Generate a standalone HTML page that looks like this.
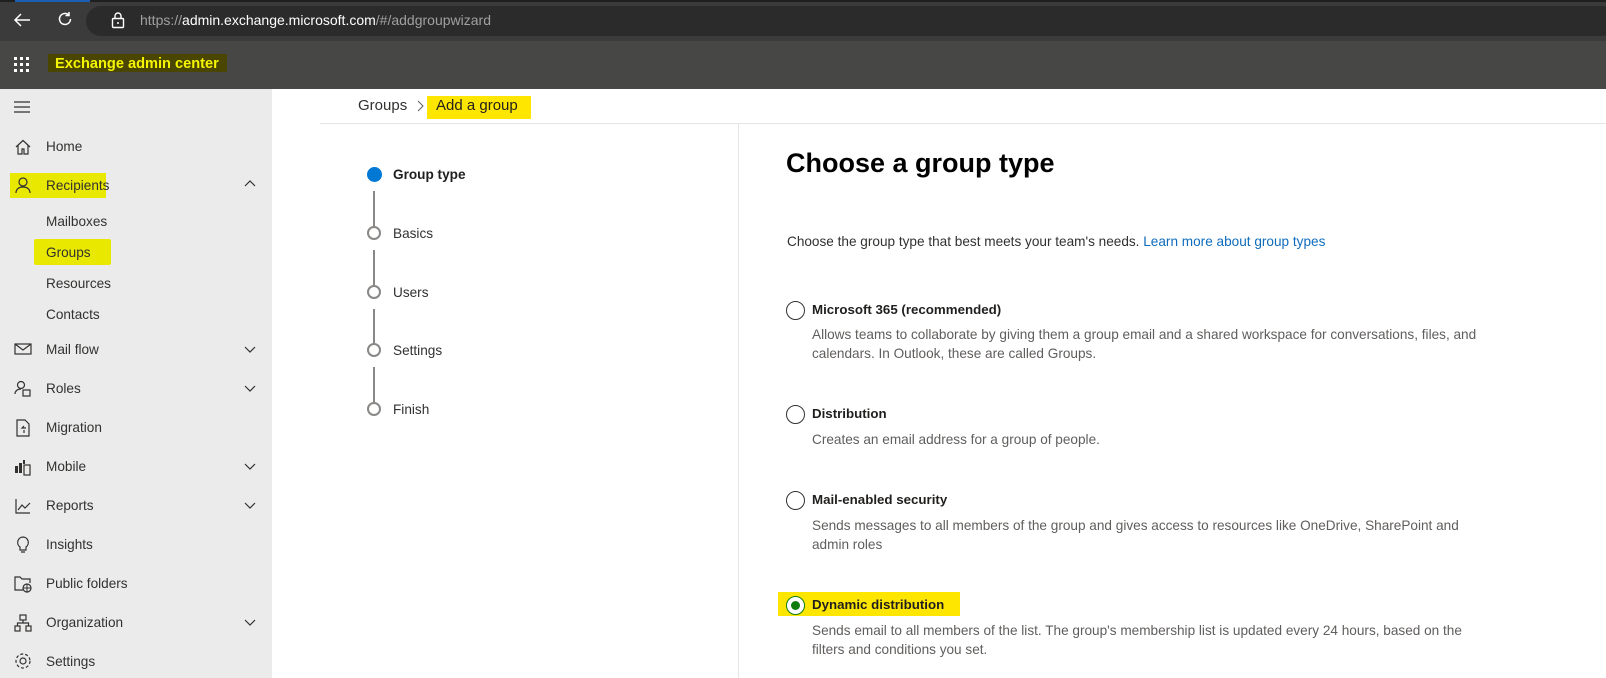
<!DOCTYPE html>
<html><head><meta charset="utf-8"><style>
*{margin:0;padding:0;box-sizing:border-box}
body{width:1606px;height:678px;overflow:hidden;position:relative;background:#fff;font-family:"Liberation Sans",sans-serif;color:#323130}
.a{position:absolute;white-space:nowrap}
.si{position:absolute;left:46px;font-size:13.6px;color:#323130;line-height:18px}
.ic{position:absolute;left:14px}
.ch{position:absolute;left:243px}
.st{position:absolute;left:367px;width:14px;height:14px;border:2px solid #8a8886;border-radius:50%;background:#fff}
.sl{position:absolute;left:393px;font-size:13.6px;line-height:16px;color:#323130}
.rd{position:absolute;left:786px;width:19px;height:19px;border:1.5px solid #323130;border-radius:50%;background:#fff}
.ot{position:absolute;left:812px;font-size:13.3px;font-weight:bold;line-height:16px;color:#201f1e}
.od{position:absolute;left:812px;font-size:13.6px;line-height:19px;color:#605e5c}
</style></head><body>
<div class="a" style="left:0;top:0;width:1606px;height:41px;background:#3b3b3b"></div>
<div class="a" style="left:0;top:0;width:1606px;height:2px;background:#1f1f1f"></div>
<div class="a" style="left:15px;top:0;width:75px;height:2px;background:#1a5fb4"></div>
<div class="a" style="left:86px;top:6px;width:1530px;height:30px;background:#2b2b2b;border-radius:15px"></div>
<svg class="a" style="left:12px;top:11px" width="20" height="18" viewBox="0 0 20 18"><path d="M18 9H3M9 3L3 9l6 6" stroke="#fff" stroke-width="1.5" fill="none"/></svg>
<svg class="a" style="left:56px;top:10px" width="18" height="18" viewBox="0 0 18 18"><path d="M14.5 9a5.5 5.5 0 1 1-2-4.3M13 2v3.5H9.5" stroke="#fff" stroke-width="1.5" fill="none"/></svg>
<svg class="a" style="left:111px;top:12px" width="14" height="17" viewBox="0 0 14 17"><rect x="1.5" y="6.5" width="11" height="9" rx="1" stroke="#fff" fill="none" stroke-width="1.4"/><path d="M4 6.5V4a3 3 0 0 1 6 0v2.5" stroke="#fff" fill="none" stroke-width="1.4"/><circle cx="7" cy="11" r="1" fill="#fff"/></svg>
<div class="a" style="left:140px;top:12px;font-size:14px;color:#a0a0a0">https://<span style="color:#fff">admin.exchange.microsoft.com</span>/#/addgroupwizard</div>
<div class="a" style="left:0;top:41px;width:1606px;height:48px;background:#474745"></div>
<svg class="a" style="left:14px;top:57px" width="16" height="16" viewBox="0 0 16 16" fill="#fff"><rect x="0" y="0" width="3" height="3"/><rect x="6" y="0" width="3" height="3"/><rect x="12" y="0" width="3" height="3"/><rect x="0" y="6" width="3" height="3"/><rect x="6" y="6" width="3" height="3"/><rect x="12" y="6" width="3" height="3"/><rect x="0" y="12" width="3" height="3"/><rect x="6" y="12" width="3" height="3"/><rect x="12" y="12" width="3" height="3"/></svg>
<div class="a" style="left:48px;top:54px;width:179px;height:18px;background:#4a4600"></div>
<div class="a" style="left:55px;top:55px;font-size:14.6px;font-weight:bold;color:#f5f500;line-height:18px">Exchange admin center</div>
<div class="a" style="left:0;top:89px;width:272px;height:589px;background:#ebebeb"></div>
<svg class="a" style="left:14px;top:101px" width="17" height="12" viewBox="0 0 17 12"><path d="M0 1h16M0 6h16M0 11h16" stroke="#323130" stroke-width="1.2"/></svg>
<div class="a" style="left:10px;top:173px;width:96px;height:25px;background:#e8e800"></div>
<div class="a" style="left:34px;top:239px;width:77px;height:26px;background:#e8e800;border-radius:2px"></div>
<svg class="ic" style="top:138px" width="18" height="18" viewBox="0 0 18 18"><path d="M2 9L9 2.5 16 9M4 7.5V16h4v-5h2v5h4V7.5" stroke="#323130" fill="none" stroke-width="1.2"/></svg>
<div class="si" style="top:138px">Home</div>
<svg class="ic" style="top:176px" width="18" height="18" viewBox="0 0 18 18"><circle cx="9" cy="6" r="4" stroke="#323130" fill="none" stroke-width="1.2"/><path d="M2 17c0-4 3-6 7-6s7 2 7 6" stroke="#323130" fill="none" stroke-width="1.2"/></svg>
<div class="si" style="top:177px">Recipients</div>
<svg class="ch" style="top:179px" width="14" height="10" viewBox="0 0 14 10"><path d="M2 7l5-5 5 5" stroke="#323130" fill="none" stroke-width="1.2"/></svg>
<div class="si" style="top:213px">Mailboxes</div>
<div class="si" style="top:244px">Groups</div>
<div class="si" style="top:275px">Resources</div>
<div class="si" style="top:306px">Contacts</div>
<svg class="ic" style="top:341px" width="18" height="16" viewBox="0 0 18 16"><rect x="1" y="3" width="16" height="10" stroke="#323130" fill="none" stroke-width="1.2"/><path d="M1 3l8 6 8-6" stroke="#323130" fill="none" stroke-width="1.2"/></svg>
<div class="si" style="top:341px">Mail flow</div>
<svg class="ic" style="top:380px" width="18" height="18" viewBox="0 0 18 18"><circle cx="7" cy="5" r="3.5" stroke="#323130" fill="none" stroke-width="1.2"/><path d="M1 14c0-3 2.5-5 6-5" stroke="#323130" fill="none" stroke-width="1.2"/><rect x="9" y="10" width="7" height="6" stroke="#323130" fill="none" stroke-width="1.2"/></svg>
<div class="si" style="top:380px">Roles</div>
<svg class="ic" style="top:419px" width="18" height="18" viewBox="0 0 18 18"><path d="M3 1h8l4 4v12H3z" stroke="#323130" fill="none" stroke-width="1.2"/><path d="M12 9H8l2-2M10 11v3" stroke="#323130" fill="none" stroke-width="1.2"/></svg>
<div class="si" style="top:419px">Migration</div>
<svg class="ic" style="top:458px" width="18" height="18" viewBox="0 0 18 18" fill="#323130"><rect x="1" y="8" width="3" height="7"/><rect x="5" y="5" width="3" height="10"/><rect x="9" y="2" width="2" height="4"/><rect x="10" y="7" width="6" height="10" fill="none" stroke="#323130" stroke-width="1.2"/></svg>
<div class="si" style="top:458px">Mobile</div>
<svg class="ic" style="top:497px" width="18" height="18" viewBox="0 0 18 18"><path d="M2 2v14h14M4 13l4-5 3 3 5-5" stroke="#323130" fill="none" stroke-width="1.2"/></svg>
<div class="si" style="top:497px">Reports</div>
<svg class="ic" style="top:536px" width="18" height="18" viewBox="0 0 18 18"><path d="M9 1a5.5 5.5 0 0 0-3 10v3h6v-3A5.5 5.5 0 0 0 9 1zM7 16h4" stroke="#323130" fill="none" stroke-width="1.2"/></svg>
<div class="si" style="top:536px">Insights</div>
<svg class="ic" style="top:575px" width="18" height="18" viewBox="0 0 18 18"><path d="M9 15H1V2h5l2 2h8v4" stroke="#323130" fill="none" stroke-width="1.2"/><circle cx="13" cy="13" r="4" stroke="#323130" fill="none" stroke-width="1.2"/><path d="M9 13h8M13 9v8" stroke="#323130" stroke-width="1"/></svg>
<div class="si" style="top:575px">Public folders</div>
<svg class="ic" style="top:614px" width="18" height="18" viewBox="0 0 18 18"><rect x="6" y="1" width="6" height="5" stroke="#323130" fill="none" stroke-width="1.2"/><rect x="1" y="12" width="5" height="5" stroke="#323130" fill="none" stroke-width="1.2"/><rect x="12" y="12" width="5" height="5" stroke="#323130" fill="none" stroke-width="1.2"/><path d="M9 6v3M3.5 12V9h11v3" stroke="#323130" fill="none" stroke-width="1.2"/></svg>
<div class="si" style="top:614px">Organization</div>
<svg class="ic" style="top:652px" width="18" height="18" viewBox="0 0 18 18"><circle cx="9" cy="9" r="3" stroke="#323130" fill="none" stroke-width="1.2"/><circle cx="9" cy="9" r="7" stroke="#323130" fill="none" stroke-width="1.2" stroke-dasharray="3 2"/></svg>
<div class="si" style="top:653px">Settings</div>
<svg class="ch" style="top:344px" width="14" height="10" viewBox="0 0 14 10"><path d="M2 3l5 5 5-5" stroke="#323130" fill="none" stroke-width="1.2"/></svg>
<svg class="ch" style="top:383px" width="14" height="10" viewBox="0 0 14 10"><path d="M2 3l5 5 5-5" stroke="#323130" fill="none" stroke-width="1.2"/></svg>
<svg class="ch" style="top:461px" width="14" height="10" viewBox="0 0 14 10"><path d="M2 3l5 5 5-5" stroke="#323130" fill="none" stroke-width="1.2"/></svg>
<svg class="ch" style="top:500px" width="14" height="10" viewBox="0 0 14 10"><path d="M2 3l5 5 5-5" stroke="#323130" fill="none" stroke-width="1.2"/></svg>
<svg class="ch" style="top:617px" width="14" height="10" viewBox="0 0 14 10"><path d="M2 3l5 5 5-5" stroke="#323130" fill="none" stroke-width="1.2"/></svg>
<div class="a" style="left:358px;top:97px;font-size:15px;color:#323130">Groups</div>
<svg class="a" style="left:415px;top:100px" width="10" height="12" viewBox="0 0 10 12"><path d="M3 1l5 5-5 5" stroke="#605e5c" fill="none" stroke-width="1"/></svg>
<div class="a" style="left:427px;top:96px;width:104px;height:23px;background:#ffe600"></div>
<div class="a" style="left:436px;top:97px;font-size:15px;color:#201f1e">Add a group</div>
<div class="a" style="left:320px;top:123px;width:1286px;height:1px;background:#e5e5e5"></div>
<div class="a" style="left:738px;top:124px;width:1px;height:554px;background:#e5e5e5"></div>
<div class="a" style="left:373px;top:191px;width:2px;height:36px;background:#8a8886"></div>
<div class="a" style="left:373px;top:250px;width:2px;height:36px;background:#8a8886"></div>
<div class="a" style="left:373px;top:309px;width:2px;height:36px;background:#8a8886"></div>
<div class="a" style="left:373px;top:367px;width:2px;height:36px;background:#8a8886"></div>
<div class="st" style="top:167px;background:#0078d4;border-color:#0078d4;width:15px;height:15px"></div>
<div class="st" style="top:226px"></div>
<div class="st" style="top:285px"></div>
<div class="st" style="top:343px"></div>
<div class="st" style="top:402px"></div>
<div class="sl" style="top:167px;font-weight:bold;color:#201f1e">Group type</div>
<div class="sl" style="top:226px">Basics</div>
<div class="sl" style="top:285px">Users</div>
<div class="sl" style="top:343px">Settings</div>
<div class="sl" style="top:402px">Finish</div>
<div class="a" style="left:786px;top:146px;font-size:27px;font-weight:bold;color:#000;line-height:34px">Choose a group type</div>
<div class="a" style="left:787px;top:234px;font-size:13.6px;color:#323130">Choose the group type that best meets your team's needs. <span style="color:#0f6cbd">Learn more about group types</span></div>
<div class="rd" style="top:301px"></div>
<div class="ot" style="top:302px">Microsoft 365 (recommended)</div>
<div class="od" style="top:325px">Allows teams to collaborate by giving them a group email and a shared workspace for conversations, files, and<br>calendars. In Outlook, these are called Groups.</div>
<div class="rd" style="top:405px"></div>
<div class="ot" style="top:406px">Distribution</div>
<div class="od" style="top:430px">Creates an email address for a group of people.</div>
<div class="rd" style="top:491px"></div>
<div class="ot" style="top:492px">Mail-enabled security</div>
<div class="od" style="top:516px">Sends messages to all members of the group and gives access to resources like OneDrive, SharePoint and<br>admin roles</div>
<div class="a" style="left:778px;top:592px;width:182px;height:24px;background:#ffe600"></div>
<div class="rd" style="top:596px;border-color:#107c10"></div>
<div class="a" style="left:791px;top:601px;width:9px;height:9px;border-radius:50%;background:#107c10"></div>
<div class="ot" style="top:597px">Dynamic distribution</div>
<div class="od" style="top:621px">Sends email to all members of the list. The group's membership list is updated every 24 hours, based on the<br>filters and conditions you set.</div>
</body></html>
